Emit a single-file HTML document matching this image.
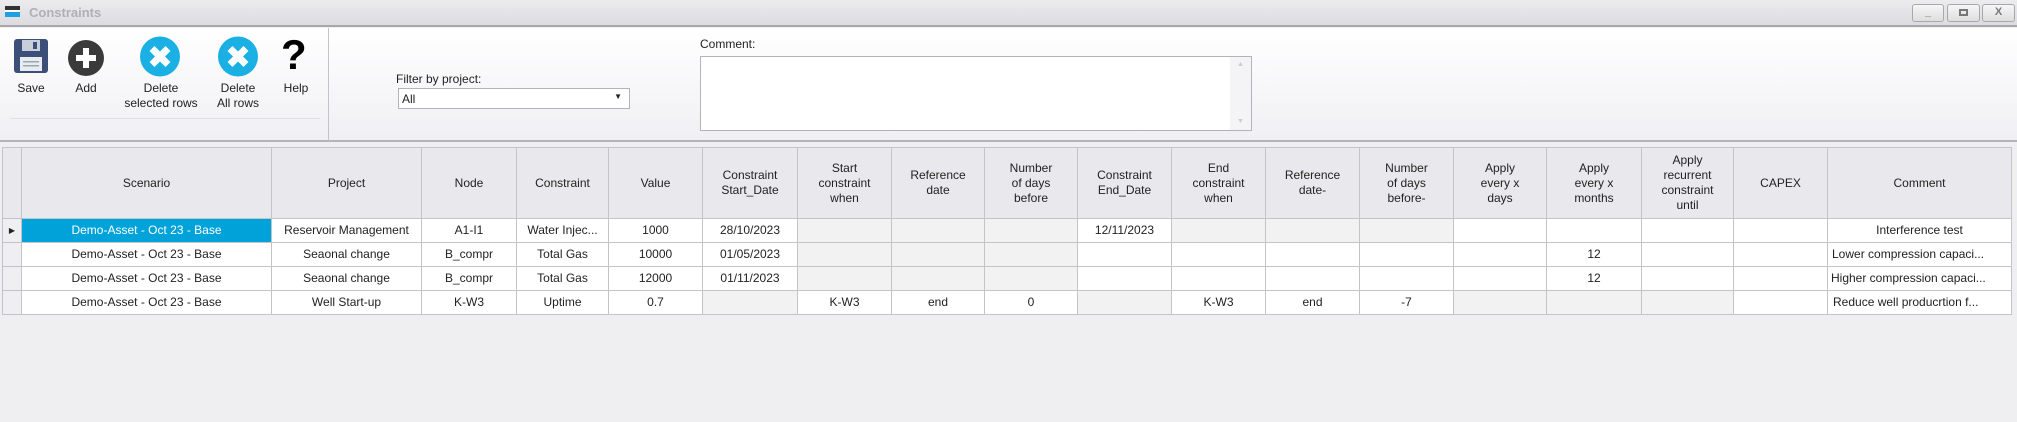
<!DOCTYPE html>
<html><head><meta charset="utf-8"><style>
*{margin:0;padding:0;box-sizing:border-box}
body{width:2017px;height:422px;overflow:hidden;background:#efeff2;font-family:"Liberation Sans",sans-serif;font-size:12px;color:#222;position:relative}
.abs{position:absolute}
#title{left:0;top:0;width:2017px;height:27px;background:linear-gradient(#ececee,#dcdce0);border-bottom:2px solid #a8a8ac}
.wb{position:absolute;top:4px;height:18px;border:1px solid #a8a8ac;border-radius:3px;background:linear-gradient(#f6f6f6,#dedede);color:#777;font-size:11px;text-align:center;line-height:15px;font-weight:bold}
#tool{left:0;top:28px;width:2017px;height:114px;background:linear-gradient(#ffffff,#f0f0f4);border-bottom:2px solid #b4b4b8}
.lbl{position:absolute;text-align:center;font-size:12px;line-height:15px;color:#222}
table{position:absolute;left:2px;top:147px;border-collapse:collapse;table-layout:fixed;width:2010px}
td,th{border:1px solid #c4c4c8;text-align:center;font-weight:normal;font-size:12px;overflow:hidden;white-space:nowrap;line-height:15px}
th{background:#e9e9ed;height:71px;white-space:normal;vertical-align:middle}
td{height:24px;background:#fff}
td.g{background:#f2f2f2}
td.rh{background:#efeff2}
td.sel{background:#00a3d9;color:#fff}
</style></head><body>
<div id="title" class="abs">
 <div class="abs" style="left:5px;top:6px;width:15px;height:4px;background:#333"></div>
 <div class="abs" style="left:5px;top:10px;width:15px;height:2px;background:#fff"></div>
 <div class="abs" style="left:5px;top:12px;width:15px;height:5px;background:#1fa0e0"></div>
 <div class="abs" style="left:29px;top:5px;font-size:13px;font-weight:bold;color:#b0b0b4">Constraints</div>
 <div class="wb" style="left:1912px;width:32px">_</div>
 <div class="wb" style="left:1947px;width:33px"><div style="position:absolute;left:11px;top:4px;width:9px;height:7px;border:2px solid #777"></div></div>
 <div class="wb" style="left:1982px;width:33px">X</div>
</div>
<div id="tool" class="abs">
 <svg class="abs" style="left:14px;top:11px" width="34" height="34" viewBox="0 0 34 34">
  <rect x="0" y="0" width="34" height="34" rx="3" fill="#3c4f78"/>
  <rect x="8" y="1" width="18" height="11" fill="#c9cfda"/><rect x="19" y="3" width="4" height="7" fill="#3c4f78"/>
  <rect x="6" y="18" width="22" height="14" fill="#e8ecf2"/><rect x="9" y="22" width="16" height="1.5" fill="#9aa"/><rect x="9" y="26" width="16" height="1.5" fill="#9aa"/>
 </svg>
 <svg class="abs" style="left:68px;top:12px" width="36" height="36" viewBox="0 0 36 36">
  <circle cx="18" cy="18" r="18" fill="#3a3a3a"/><rect x="15" y="8" width="6" height="20" fill="#fff"/><rect x="8" y="15" width="20" height="6" fill="#fff"/>
 </svg>
 <svg class="abs" style="left:140px;top:8px" width="40" height="41" viewBox="0 0 40 40">
  <circle cx="20" cy="20" r="20" fill="#1ab0e4"/><path d="M12 12 L28 28 M28 12 L12 28" stroke="#fff" stroke-width="7" stroke-linecap="butt"/>
 </svg>
 <svg class="abs" style="left:218px;top:8px" width="40" height="41" viewBox="0 0 40 40">
  <circle cx="20" cy="20" r="20" fill="#1ab0e4"/><path d="M12 12 L28 28 M28 12 L12 28" stroke="#fff" stroke-width="7"/>
 </svg>
 <div class="abs" style="left:281px;top:4px;font-size:42px;font-weight:bold;color:#000;line-height:46px">?</div>
 <div class="lbl" style="left:11px;top:53px;width:40px">Save</div>
 <div class="lbl" style="left:66px;top:53px;width:40px">Add</div>
 <div class="lbl" style="left:115px;top:53px;width:92px">Delete<br>selected rows</div>
 <div class="lbl" style="left:208px;top:53px;width:60px">Delete<br>All rows</div>
 <div class="lbl" style="left:276px;top:53px;width:40px">Help</div>
 <div class="abs" style="left:10px;top:90px;width:310px;height:1px;background:#e0e0e4"></div>
 <div class="abs" style="left:328px;top:0;width:1px;height:113px;background:#c4c4c8"></div>
 <div class="abs" style="left:396px;top:44px">Filter by project:</div>
 <div class="abs" style="left:398px;top:60px;width:232px;height:21px;border:1px solid #b4b4b8;background:#fff;padding:3px 3px;font-size:12px">All<span style="position:absolute;right:7px;top:3px;font-size:8px">▼</span></div>
 <div class="abs" style="left:700px;top:9px">Comment:</div>
 <div class="abs" style="left:700px;top:28px;width:552px;height:75px;border:1px solid #b4b4b8;background:#fff">
  <div class="abs" style="right:0;top:0;width:21px;height:73px;background:#f4f4f6;color:#ccc;font-size:7px;text-align:center;line-height:16px">▲<div style="position:absolute;bottom:0;width:21px">▼</div></div>
 </div>
</div>
<table>
<colgroup><col style="width:19px"><col style="width:250px"><col style="width:150px"><col style="width:95px"><col style="width:92px"><col style="width:94px"><col style="width:95px"><col style="width:94px"><col style="width:93px"><col style="width:93px"><col style="width:94px"><col style="width:94px"><col style="width:94px"><col style="width:94px"><col style="width:93px"><col style="width:95px"><col style="width:92px"><col style="width:94px"><col style="width:184px"></colgroup>
<tr><th></th><th>Scenario</th><th>Project</th><th>Node</th><th>Constraint</th><th>Value</th><th>Constraint<br>Start_Date</th><th>Start<br>constraint<br>when</th><th>Reference<br>date</th><th>Number<br>of days<br>before</th><th>Constraint<br>End_Date</th><th>End<br>constraint<br>when</th><th>Reference<br>date-</th><th>Number<br>of days<br>before-</th><th>Apply<br>every x<br>days</th><th>Apply<br>every x<br>months</th><th>Apply<br>recurrent<br>constraint<br>until</th><th>CAPEX</th><th>Comment</th></tr>
<tr><td class="rh" style="font-size:8px">▶</td><td class="sel">Demo-Asset - Oct 23 - Base</td><td>Reservoir Management</td><td>A1-I1</td><td>Water Injec...</td><td>1000</td><td>28/10/2023</td><td class="g"></td><td class="g"></td><td class="g"></td><td>12/11/2023</td><td class="g"></td><td class="g"></td><td class="g"></td><td></td><td></td><td></td><td></td><td>Interference test</td></tr>
<tr><td class="rh"></td><td>Demo-Asset - Oct 23 - Base</td><td>Seaonal change</td><td>B_compr</td><td>Total Gas</td><td>10000</td><td>01/05/2023</td><td class="g"></td><td class="g"></td><td class="g"></td><td></td><td></td><td></td><td></td><td></td><td>12</td><td></td><td></td><td style="text-align:left;padding-left:4px">Lower compression capaci...</td></tr>
<tr><td class="rh"></td><td>Demo-Asset - Oct 23 - Base</td><td>Seaonal change</td><td>B_compr</td><td>Total Gas</td><td>12000</td><td>01/11/2023</td><td class="g"></td><td class="g"></td><td class="g"></td><td></td><td></td><td></td><td></td><td></td><td>12</td><td></td><td></td><td style="text-align:left;padding-left:3px">Higher compression capaci...</td></tr>
<tr><td class="rh"></td><td>Demo-Asset - Oct 23 - Base</td><td>Well Start-up</td><td>K-W3</td><td>Uptime</td><td>0.7</td><td class="g"></td><td>K-W3</td><td>end</td><td>0</td><td class="g"></td><td>K-W3</td><td>end</td><td>-7</td><td class="g"></td><td class="g"></td><td class="g"></td><td></td><td style="text-align:left;padding-left:5px">Reduce well producrtion f...</td></tr>
</table>
</body></html>
